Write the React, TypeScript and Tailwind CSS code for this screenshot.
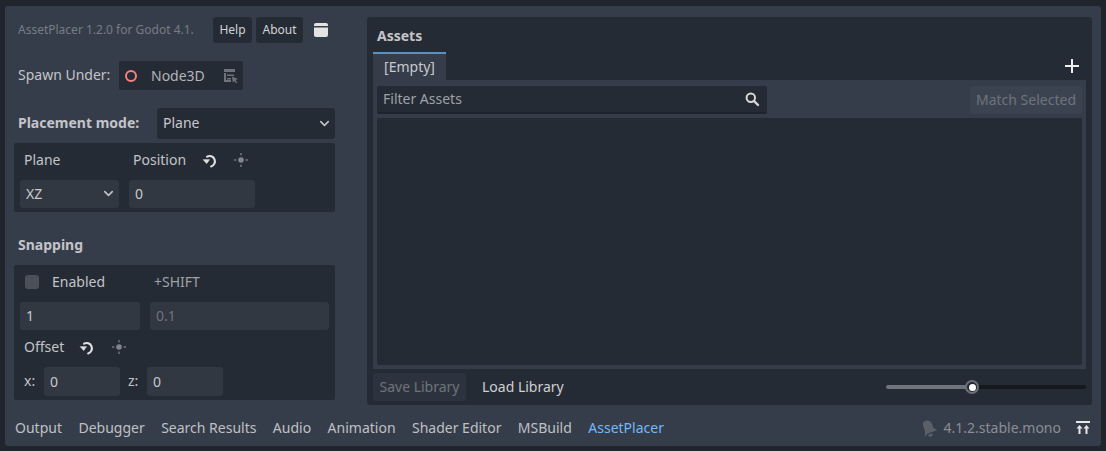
import { ChevronDown } from "lucide-react";

const font = { fontFamily: '"Noto Sans", sans-serif' };

function ResetIcon() {
  return (
    <svg width="17" height="17" viewBox="0 0 16 16" fill="none">
      <path d="M4.8 4.4A5 5 0 1 1 8.6 13.6" stroke="#e0e0e0" strokeWidth="2" strokeLinecap="round" />
      <path d="M1.2 7.2 L7 7.2 L4.4 10.8 Z" fill="#e0e0e0" stroke="#e0e0e0" strokeWidth="0.6" strokeLinejoin="round" />
    </svg>
  );
}

function PinIcon() {
  return (
    <svg width="16" height="16" viewBox="0 0 16 16" fill="#81858d">
      <circle cx="8" cy="8" r="2.8" />
      <rect x="7.4" y="1" width="1.2" height="2.4" />
      <rect x="7.4" y="12.6" width="1.2" height="2.4" />
      <rect x="1" y="7.4" width="2.4" height="1.2" />
      <rect x="12.6" y="7.4" width="2.4" height="1.2" />
    </svg>
  );
}

function Field({ value, width, dim }: { value: string; width: string; dim?: boolean }) {
  return (
    <div className={`flex h-[28px] items-center rounded-[3px] bg-[#313842] px-[6px] pb-[1px] ${width} ${dim ? "text-[#6f737b]" : "text-[#c8c9cc]"}`}>
      {value}
    </div>
  );
}

function LeftColumn() {
  return (
    <div className="flex w-[321px] flex-col">
      <div className="flex h-[26px] items-center pl-[4px]">
        <span className="w-[195px] text-[12px] text-[#777c85]">AssetPlacer 1.2.0 for Godot 4.1.</span>
        <button className="flex h-[26px] w-[39px] items-center justify-center rounded-[3px] bg-[#252b35] text-[12px] text-[#d2d3d6]">Help</button>
        <button className="ml-[4px] flex h-[26px] w-[47px] items-center justify-center rounded-[3px] bg-[#252b35] text-[12px] text-[#d2d3d6]">About</button>
        <svg className="ml-[10px]" width="16" height="16" viewBox="0 0 16 16">
          <path d="M3 1h10a2 2 0 0 1 2 2v1H1V3a2 2 0 0 1 2-2z" fill="#e4e4e4" />
          <path d="M1 5.5h14V13a2 2 0 0 1-2 2H3a2 2 0 0 1-2-2z" fill="#e4e4e4" />
        </svg>
      </div>

      <div className="mt-[18px] flex h-[29px] items-center pl-[4px]">
        <span className="mb-[3px] w-[101px] text-[#c3c4c8]">Spawn Under:</span>
        <div className="flex h-[29px] w-[124px] items-center rounded-[2px] bg-[#252b35] pl-[6px]">
          <span className="h-[12px] w-[12px] shrink-0 rounded-full border-[2px] border-[#fc7f7f]" />
          <span className="ml-[14px] text-[#b3b4b8]">Node3D</span>
          <svg className="ml-[18px]" width="16" height="16" viewBox="0 0 16 16" fill="#6f737b">
            <path d="M1 1h11v3H1zM1 5h2v8H1zM4 6.5h7V8H4zM4 10h4v1.5H4zM1 12h7v2H1z" />
            <path d="M9 8.5l6 2.6-2.4 1 1.6 2.4-1.2.8-1.6-2.4-1.6 1.6z" />
          </svg>
        </div>
      </div>

      <div className="mt-[18px] flex h-[31px] items-center pl-[4px]">
        <span className="mb-[2px] w-[139px] font-bold text-[#c3c4c8]">Placement mode:</span>
        <div className="flex h-[31px] w-[178px] items-center justify-between rounded-[3px] bg-[#252b35] pl-[6px] pr-[3px] text-[#c8c9cc]">
          <span className="mb-[2px]">Plane</span>
          <ChevronDown size={15} strokeWidth={2.5} className="text-[#c3c4c8]" />
        </div>
      </div>

      <div className="mt-[4px] flex h-[69px] flex-col rounded-[2px] bg-[#252b35] px-[6px] pt-[6px]">
        <div className="flex h-[22px] items-center text-[#c3c4c8]">
          <span className="mb-[2px] w-[109px] pl-[4px]">Plane</span>
          <span className="mb-[2px] w-[73px] pl-[4px]">Position</span>
          <ResetIcon />
          <span className="ml-[14px]"><PinIcon /></span>
        </div>
        <div className="mt-[9px] flex gap-[10px]">
          <div className="flex h-[28px] w-[99px] items-center justify-between rounded-[3px] bg-[#313842] pb-[1px] pl-[6px] pr-[3px] text-[#c8c9cc]">
            XZ
            <ChevronDown size={15} strokeWidth={2.5} className="text-[#c3c4c8]" />
          </div>
          <Field value="0" width="w-[126px]" />
        </div>
      </div>

      <div className="mt-[23px] pl-[4px] font-bold leading-[20px] text-[#c3c4c8]">Snapping</div>

      <div className="mt-[10px] flex h-[135px] flex-col rounded-[2px] bg-[#252b35] px-[6px] pt-[6px]">
        <div className="flex h-[22px] items-center text-[#c3c4c8]">
          <span className="ml-[5px] h-[14px] w-[14px] rounded-[3px] bg-[#4c5058]" />
          <span className="mb-[2px] ml-[13px] w-[102px]">Enabled</span>
          <span className="mb-[2px] text-[#9fa1a6]">+SHIFT</span>
        </div>
        <div className="mt-[9px] flex gap-[10px]">
          <Field value="1" width="w-[120px]" />
          <Field value="0.1" width="w-[179px]" dim />
        </div>
        <div className="mt-[6px] flex h-[22px] items-center text-[#c3c4c8]">
          <span className="mb-[2px] ml-[4px] w-[55px]">Offset</span>
          <ResetIcon />
          <span className="ml-[15px]"><PinIcon /></span>
        </div>
        <div className="mt-[9px] flex items-center text-[#c3c4c8]">
          <span className="mb-[3px] ml-[4px] w-[20px]">x:</span>
          <div className="flex h-[29px] w-[76px] items-center rounded-[3px] bg-[#313842] px-[6px] pb-[1px] text-[#c8c9cc]">0</div>
          <span className="mb-[3px] ml-[8px] w-[19px]">z:</span>
          <div className="flex h-[29px] w-[76px] items-center rounded-[3px] bg-[#313842] px-[6px] pb-[1px] text-[#c8c9cc]">0</div>
        </div>
      </div>
    </div>
  );
}

function AssetsPanel() {
  return (
    <div className="ml-[32px] flex h-[388px] w-[725px] flex-col rounded-[3px] bg-[#252b35] px-[6px] pt-[9px]">
      <div className="pl-[4px] font-bold leading-[20px] text-[#c3c4c8]">Assets</div>
      <div className="mt-[6px] flex h-[28px] items-start justify-between">
        <div className="flex h-[28px] w-[73px] items-center justify-center border-t-[2px] border-[#5792c7] bg-[#363d4a] pb-[1px] text-[#c8c9cc]">[Empty]</div>
        <svg className="mr-[6px] mt-[6px]" width="16" height="16" viewBox="0 0 16 16" fill="#efefef">
          <rect x="1" y="7" width="14" height="2" />
          <rect x="7" y="1" width="2" height="14" />
        </svg>
      </div>
      <div className="flex h-[289px] w-[713px] flex-col bg-[#363d4a] p-[4px] pt-[6px]">
        <div className="flex justify-between">
          <div className="flex h-[28px] w-[390px] items-center justify-between rounded-[2px] border-b-[2px] border-[#1f242c] bg-[#252b35] pb-[1px] pl-[6px] pr-[6px] text-[#9fa1a6]">
            Filter Assets
            <svg className="mr-[1px]" width="16" height="16" viewBox="0 0 16 16" fill="none" stroke="#d8d8d8">
              <circle cx="6.8" cy="6.8" r="4.2" strokeWidth="2" />
              <path d="M10 10L14 14" strokeWidth="2.4" strokeLinecap="round" />
            </svg>
          </div>
          <div className="flex h-[28px] w-[112px] items-center justify-center rounded-[3px] bg-[#3c4350] pb-[2px] text-[#6f737b]">Match Selected</div>
        </div>
        <div className="mt-[4px] flex-1 rounded-[2px] bg-[#252b35]" />
      </div>
      <div className="mt-[4px] flex h-[28px] items-center">
        <div className="flex h-[28px] w-[93px] items-center justify-center rounded-[3px] bg-[#2d333e] pb-[1px] text-[#6f737b]">Save Library</div>
        <span className="mb-[1px] ml-[16px] text-[#cfd0d3]">Load Library</span>
        <div className="relative ml-auto h-[4px] w-[200px] rounded-full bg-[#15181d]">
          <div className="h-[4px] w-[85px] rounded-full bg-[#70747c]" />
          <span className="absolute left-[79px] top-[-5px] flex h-[14px] w-[14px] items-center justify-center rounded-full border-[2px] border-[#6b6f77] bg-[#252b35]">
            <span className="h-[7px] w-[7px] shrink-0 rounded-full bg-white" />
          </span>
        </div>
      </div>
    </div>
  );
}

function BottomBar() {
  const tabs = ["Output", "Debugger", "Search Results", "Audio", "Animation", "Shader Editor", "MSBuild"];
  return (
    <div className="mt-auto flex h-[37px] items-center pl-[10px] pr-[10px]">
      <div className="flex gap-[16.45px] text-[#bfc0c4]">
        {tabs.map((t) => (
          <span key={t}>{t}</span>
        ))}
        <span className="text-[#70bafa]">AssetPlacer</span>
      </div>
      <svg className="ml-auto" width="18" height="18" viewBox="1 1 14 14" fill="#5a5f68">
        <path d="M8 2c2.5 0 4 1.8 4 4v3l2 3H6.5l-3 1.5L5 9V6c0-2.2.8-4 3-4zM6 13h4l-1 2H7z" transform="rotate(-20 8 8)" />
      </svg>
      <span className="ml-[7px] text-[#8a8d94]">4.1.2.stable.mono</span>
      <svg className="ml-[14px]" width="16" height="16" viewBox="0 0 16 16" fill="#e6e6e6">
        <rect x="1" y="1" width="14" height="2" />
        <path d="M4.5 5L7.5 8.5H5.5V14H3.5V8.5H1.5zM11.5 5L14.5 8.5H12.5V14H10.5V8.5H8.5z" />
      </svg>
    </div>
  );
}

export default function App() {
  return (
    <div style={font} className="h-[451px] w-[1106px] overflow-hidden bg-[#20242c] px-[5px] pb-[5px] pt-[6px] text-[14px]">
      <div className="flex h-[440px] flex-col rounded-[3px] bg-[#363d4a]">
        <div className="flex pl-[9px] pt-[11px]">
          <LeftColumn />
          <AssetsPanel />
        </div>
        <BottomBar />
      </div>
    </div>
  );
}
